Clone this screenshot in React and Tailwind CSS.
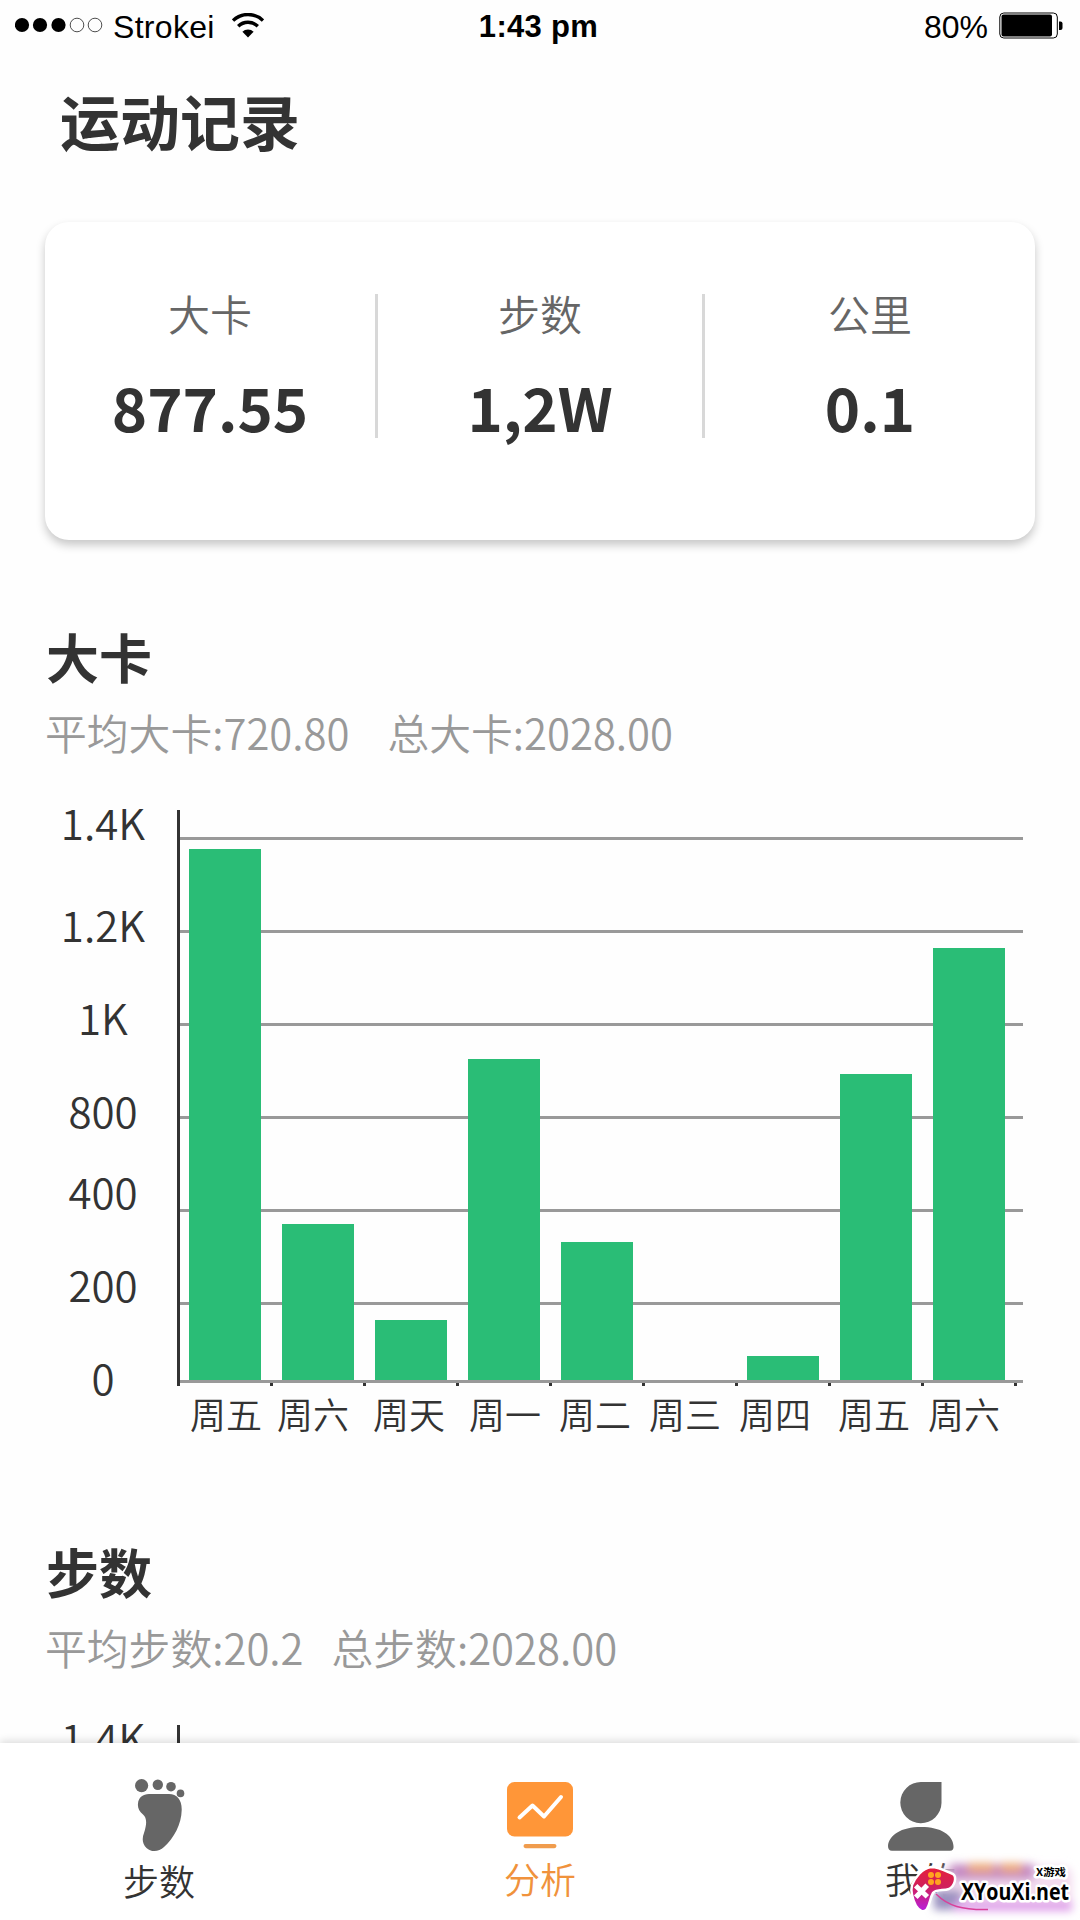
import { Fragment } from 'react';

const STATS = [
  { label: '大卡', value: '877.55' },
  { label: '步数', value: '1,2W' },
  { label: '公里', value: '0.1' },
];

// height in px above the baseline; gap = space before the day label
const DAYS = [
  { day: '周五', height: 531, gap: 'ml-[190px]' },
  { day: '周六', height: 156, gap: 'ml-[15px]' },
  { day: '周天', height: 60, gap: 'ml-[24px]' },
  { day: '周一', height: 321, gap: 'ml-[24px]' },
  { day: '周二', height: 138, gap: 'ml-[18px]' },
  { day: '周三', height: 0, gap: 'ml-[18px]' },
  { day: '周四', height: 24, gap: 'ml-[18px]' },
  { day: '周五', height: 306, gap: 'ml-[27px]' },
  { day: '周六', height: 432, gap: 'ml-[18px]' },
];

const Y_LABELS = [
  { text: '1.4K', box: 'h-[102px]' },
  { text: '1.2K', box: 'h-[93px]' },
  { text: '1K', box: 'h-[93px]' },
  { text: '800', box: 'h-[81px]' },
  { text: '400', box: 'h-[93px]' },
  { text: '200', box: 'h-[93px]' },
  { text: '0', box: 'h-[30px]' },
];

function WifiIcon() {
  return (
    <svg width="32" height="25" viewBox="0 0 32 25" className="ml-[18px]" fill="none" stroke="#000">
      <path d="M1 7.6a21.5 21.5 0 0 1 30 0" strokeWidth="3.4" />
      <path d="M6.2 13.2a14 14 0 0 1 19.6 0" strokeWidth="3.4" />
      <path d="M16 24.5l-5.6-5.7a8 8 0 0 1 11.2 0z" fill="#000" stroke="none" />
    </svg>
  );
}

function StatusBar() {
  return (
    <div className="grid h-[50px] shrink-0 grid-cols-3 items-center font-['Liberation_Sans',sans-serif] text-[32px] leading-none text-black">
      <div className="flex items-center pl-[15px]">
        <svg width="88" height="16" viewBox="0 0 88 16">
          {[7, 25, 43.5].map((x) => (
            <circle key={x} cx={x} cy="8" r="7.1" />
          ))}
          {[62, 80].map((x) => (
            <circle key={x} cx={x} cy="8" r="6.8" fill="none" stroke="#222" strokeWidth="0.8" />
          ))}
        </svg>
        <span className="ml-[10px] mt-[3px] w-[101px] tracking-[0.3px]">Strokei</span>
        <WifiIcon />
      </div>
      <div className="mt-[3px] mr-[3px] text-center text-[31px] font-bold tracking-[0.3px]">1:43 pm</div>
      <div className="flex items-center justify-end pr-[16px]">
        <span className="mt-[3px]">80%</span>
        <svg width="65" height="27" viewBox="0 0 65 27" className="ml-[11px]">
          <rect x="0.8" y="1" width="57.5" height="25" rx="4" fill="#fff" stroke="#000" strokeWidth="1" />
          <rect x="2.5" y="2.5" width="50.5" height="22" rx="2" />
          <path d="M60 9.5h1.5a2 2 0 0 1 2 2v4.5a2 2 0 0 1-2 2h-1.5z" />
        </svg>
      </div>
    </div>
  );
}

function SummaryCard() {
  return (
    <div className="mx-[45px] mt-[72px] grid h-[318px] shrink-0 grid-cols-[330px_3px_324px_3px_330px] rounded-[24px] bg-white pt-[72px] shadow-[0_5px_10px_rgba(0,0,0,0.22)]">
      {STATS.map((s, i) => (
        <Fragment key={s.label}>
          {i > 0 && <div className="h-[144px] bg-[#d8d8d8]" />}
          <div className="-mt-[2px] flex flex-col items-center">
            <span className="text-[42px] leading-[42px] font-[350] text-[#666]">{s.label}</span>
            <span className="mt-[41px] text-[60px] leading-[62px] font-bold">{s.value}</span>
          </div>
        </Fragment>
      ))}
    </div>
  );
}

function BarChart() {
  return (
    <div className="mt-[48px]">
      <div className="flex h-[576px]">
        <div className="-mt-[3px] w-[177px] pl-[28px]">
          {Y_LABELS.map((l) => (
            <div key={l.text} className={`${l.box} w-[150px] text-center text-[42px] leading-[30px] font-[350]`}>
              {l.text}
            </div>
          ))}
        </div>
        <div className="h-[576px] w-[3px] bg-[#333]" />
        <svg width="843" height="576" viewBox="0 0 843 576" shapeRendering="crispEdges">
          {[27, 120, 213, 306, 399, 492].map((y) => (
            <rect key={y} x="0" y={y} width="843" height="3" fill="#999" />
          ))}
          {DAYS.map((d, i) => (
            <g key={i}>
              <rect x={9 + i * 93} y={570 - d.height} width="72" height={d.height} fill="#2abd76" />
              <rect x={90 + i * 93} y="573" width="3" height="3" fill="#333" />
            </g>
          ))}
          <rect x="0" y="570" width="843" height="3" fill="#999" />
        </svg>
      </div>
      <div className="mt-[9px] flex text-[36px] leading-[36px] font-[350]">
        {DAYS.map((d, i) => (
          <span key={i} className={`${d.gap} w-[72px] shrink-0 whitespace-nowrap`}>
            {d.day}
          </span>
        ))}
      </div>
    </div>
  );
}

function Section({ title, average, total, gap }) {
  return (
    <section className="h-[915px]">
      <h2 className="pl-[46px] text-[53px] leading-[52px] font-bold">{title}</h2>
      <div className={`${gap} mt-[20px] flex pl-[45px] text-[41.8px] leading-[60px] font-[350] text-[#999]`}>
        <span>{average}</span>
        <span>{total}</span>
      </div>
      <BarChart />
    </section>
  );
}

function FootIcon() {
  return (
    <svg width="50" height="73" viewBox="0 0 50 73" fill="#666" className="ml-[2px]">
      <circle cx="6.6" cy="6.6" r="6.6" />
      <circle cx="22.8" cy="5.7" r="5.2" />
      <circle cx="36" cy="7.7" r="4.8" />
      <circle cx="45.5" cy="14.4" r="3.8" />
      <path d="M14 15H34C42 15 47 21 46.7 31C46.5 45 39 59 29 68C24 73 16 73.5 11.5 69C7 64.5 7 59 9 54C12 45 12 39 8 35.5C4 32 2.5 29 3 24.5C3.5 18.5 8 15 14 15Z" />
    </svg>
  );
}

function AnalysisIcon() {
  return (
    <svg width="66" height="67" viewBox="0 0 66 67" fill="#ff9638">
      <rect width="66" height="54.5" rx="7.5" />
      <path d="M12.5 35.5L25.5 23.5L37 34.5L54 15" fill="none" stroke="#fff" strokeWidth="4" strokeLinecap="round" strokeLinejoin="round" />
      <rect x="16.5" y="62" width="33" height="4.2" rx="2.1" fill="#f09c4d" />
    </svg>
  );
}

function PersonIcon() {
  return (
    <svg width="66" height="69" viewBox="0 0 66 69" fill="#666">
      <path d="M33 0H53.5V21A20.6 20.6 0 1 1 33 0Z" />
      <path d="M0 64C1 53 13 45 33 45S65 53 65.5 64Q66 68.8 62 68.8H4Q0 68.8 0 64Z" />
    </svg>
  );
}

// site badge in the bottom right corner
function SiteBadge() {
  return (
    <svg className="absolute right-0 bottom-0" width="180" height="70" viewBox="0 0 180 70">
      <defs>
        <linearGradient id="pad" x1="0" y1="0" x2="0" y2="1">
          <stop offset="0" stopColor="#e6203a" />
          <stop offset="0.45" stopColor="#d0205c" />
          <stop offset="1" stopColor="#b81ee0" />
        </linearGradient>
        <filter id="glow" x="-20%" y="-60%" width="140%" height="220%">
          <feGaussianBlur stdDeviation="4" />
        </filter>
      </defs>
      <g filter="url(#glow)">
        <rect x="40" y="16" width="132" height="44" rx="10" fill="#f3dcef" />
        <rect x="50" y="14" width="84" height="16" fill="#c68cc4" />
        <rect x="68" y="13" width="26" height="10" fill="#ecaa80" />
        <rect x="100" y="13" width="22" height="10" fill="#ecaa80" />
        <rect x="34" y="40" width="28" height="20" fill="#9a92c0" />
        <rect x="54" y="51" width="118" height="10" fill="#dfa0ea" />
      </g>
      <path d="M36 44C48 56 62 60 88 59.5" fill="none" stroke="#d9409a" strokeWidth="1.5" />
      <path
        d="M31 17C39 17 46 21 53 24C57 27 55 36 49 39C43 41 37 39 33 43C30 48 30 54 27 59C24 63 19 61 16 56C13 50 10 43 12 35C15 28 22 18 31 17Z"
        fill="url(#pad)"
        stroke="#fff"
        strokeWidth="2.5"
      />
      <g fill="#ffa51f">
        <circle cx="31" cy="25" r="3" />
        <circle cx="38" cy="25" r="3" />
        <circle cx="31" cy="32" r="3" />
        <circle cx="38" cy="32" r="3" />
      </g>
      <path d="M17.5 37.5L25.5 45M25.5 37L17.5 45.5" stroke="#fff" strokeWidth="5" strokeLinecap="square" />
      <g stroke="#fff" strokeWidth="5" strokeLinejoin="round" paintOrder="stroke" fill="#000" fontWeight="700">
        <text x="136" y="26" fontSize="10.5" textLength="30" lengthAdjust="spacingAndGlyphs" fontFamily="'Noto Sans CJK SC', sans-serif">
          X游戏
        </text>
        <text x="61" y="50" fontSize="24" textLength="108" lengthAdjust="spacingAndGlyphs" fontFamily="'Open Sans', sans-serif">
          XYouXi.net
        </text>
      </g>
    </svg>
  );
}

function TabBar() {
  return (
    <nav className="relative flex h-[177px] shrink-0 justify-between bg-white pr-[123px] pl-[123px] text-[36px] leading-[36px] font-[350] shadow-[0_-2px_8px_rgba(0,0,0,0.14)]">
      <div className="flex w-[72px] flex-col items-center pt-[36px]">
        <FootIcon />
        <span className="mt-[10px]">步数</span>
      </div>
      <div className="flex w-[72px] flex-col items-center pt-[39px] text-[#f0923c]">
        <AnalysisIcon />
        <span className="mt-[11px]">分析</span>
      </div>
      <div className="flex w-[72px] flex-col items-center pt-[39px]">
        <PersonIcon />
        <span className="mt-[9px]">我的</span>
      </div>
      <SiteBadge />
    </nav>
  );
}

export default function App() {
  return (
    <div className="flex h-[1920px] w-[1080px] flex-col overflow-hidden bg-[#fefefe] font-['Noto_Sans_CJK_SC',sans-serif] text-[#333]">
      <main className="flex h-[1743px] flex-col overflow-hidden">
        <StatusBar />
        <h1 className="mt-[40px] shrink-0 pl-[60px] text-[60px] leading-[60px] font-bold">运动记录</h1>
        <SummaryCard />
        <div className="mt-[90px] shrink-0">
          <Section title="大卡" average="平均大卡:720.80" total="总大卡:2028.00" gap="gap-[38px]" />
          <Section title="步数" average="平均步数:20.2" total="总步数:2028.00" gap="gap-[28px]" />
        </div>
      </main>
      <TabBar />
    </div>
  );
}
